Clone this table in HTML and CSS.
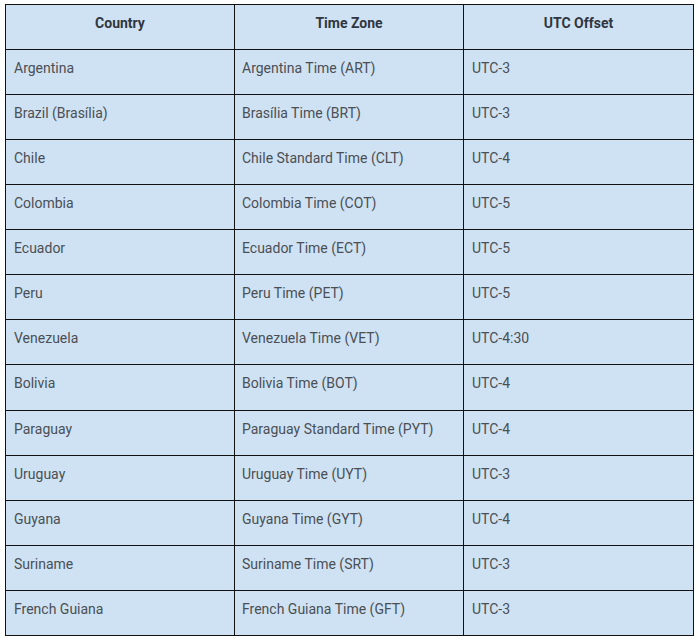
FILE: index.html
```
<!DOCTYPE html>
<html>
<head>
<meta charset="utf-8">
<link rel="stylesheet" href="styles.css">
</head>
<body>
<div class="wrap">
<table class="tz">
<colgroup><col class="c1"><col class="c2"><col class="c3"></colgroup>
<thead>
<tr><th>Country</th><th>Time Zone</th><th>UTC Offset</th></tr>
</thead>
<tbody>
<tr><td>Argentina</td><td>Argentina Time (ART)</td><td>UTC-3</td></tr>
<tr><td>Brazil (Brasília)</td><td>Brasília Time (BRT)</td><td>UTC-3</td></tr>
<tr><td>Chile</td><td>Chile Standard Time (CLT)</td><td>UTC-4</td></tr>
<tr><td>Colombia</td><td>Colombia Time (COT)</td><td>UTC-5</td></tr>
<tr><td>Ecuador</td><td>Ecuador Time (ECT)</td><td>UTC-5</td></tr>
<tr><td>Peru</td><td>Peru Time (PET)</td><td>UTC-5</td></tr>
<tr><td>Venezuela</td><td>Venezuela Time (VET)</td><td>UTC-4:30</td></tr>
<tr><td>Bolivia</td><td>Bolivia Time (BOT)</td><td>UTC-4</td></tr>
<tr><td>Paraguay</td><td>Paraguay Standard Time (PYT)</td><td>UTC-4</td></tr>
<tr><td>Uruguay</td><td>Uruguay Time (UYT)</td><td>UTC-3</td></tr>
<tr><td>Guyana</td><td>Guyana Time (GYT)</td><td>UTC-4</td></tr>
<tr><td>Suriname</td><td>Suriname Time (SRT)</td><td>UTC-3</td></tr>
<tr><td>French Guiana</td><td>French Guiana Time (GFT)</td><td>UTC-3</td></tr>
</tbody>
</table>
</div>
</body>
</html>
```
FILE: styles.css
```
html, body {
  margin: 0;
  padding: 0;
  background: #ffffff;
}
.wrap {
  padding: 4px 0 0 5px;
}
.tz {
  border-collapse: collapse;
  table-layout: fixed;
  width: 688px;
  height: 632px;
  background: #cfe2f3;
  font-family: Roboto, "Liberation Sans", sans-serif;
  font-size: 14px;
  line-height: 20px;
  color: #4a4f55;
}
.c1 { width: 229px; }
.c2 { width: 229px; }
.c3 { width: 230px; }
.tz tr {
  height: 45px;
}
.tz th, .tz td {
  border: 1px solid #111111;
  padding: 8px 8px 0 8px;
  vertical-align: top;
  text-align: left;
}
.tz td:nth-child(2) {
  padding-left: 7px;
}
.tz th {
  text-align: center;
  font-weight: bold;
  color: #2f3640;
}
```
